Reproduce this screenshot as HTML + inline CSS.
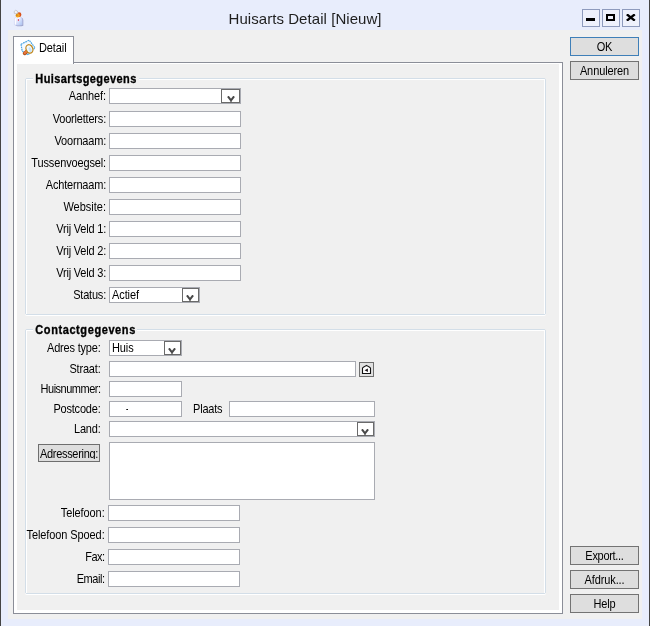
<!DOCTYPE html>
<html><head><meta charset="utf-8"><title>Huisarts Detail [Nieuw]</title>
<style>
*{box-sizing:border-box;margin:0;padding:0}
html,body{width:650px;height:626px;overflow:hidden}
body{will-change:transform;background:#e8edfc;font-family:"Liberation Sans",sans-serif;font-size:11px;color:#000;position:relative}
.abs,.lbl,.inp,.cmb,.btn,.grp,.gt{position:absolute}
#bl{left:0;top:0;width:1px;height:626px;background:#444}
#br{left:649px;top:0;width:1px;height:626px;background:#444}
#title{letter-spacing:.06px;left:228.5px;top:8px;width:152px;height:22px;font-size:15px;line-height:22px;color:#1e1e1e;white-space:nowrap}
#client{left:8px;top:30px;width:634px;height:589px;background:#f0f0f0}
.wb{position:absolute;top:9px;width:18px;height:18px;border:1px solid #8e9bbd;background:#eef1fc}
.page{left:13px;top:62px;width:550px;height:552px;border:1px solid #8b8e98;background:#fff}
.pagein{left:17px;top:64px;width:542px;height:546px;background:#f0f0f0}
.tab{left:13px;top:36px;width:61px;height:28px;border:1px solid #8b8e98;border-bottom:none;background:#fff}
.t{display:inline-block;transform:scaleY(1.12)}
.tabtxt{left:39px;top:42px;line-height:13px;letter-spacing:-0.1px;transform:scaleY(1.12)}
.grp{border:1px solid #d3dee8;border-radius:2px;box-shadow:0 1px 0 #fff}
.grp:after{content:"";position:absolute;left:0;top:0;right:0;bottom:0;border:1px solid #fff;border-bottom:none;border-radius:1px 1px 0 0}
.gt{-webkit-text-stroke:.3px #000;font-weight:bold;line-height:13px;letter-spacing:.42px;padding:0 3px 0 3px;white-space:nowrap;transform:scaleY(1.12)}
.lbl{text-align:right;line-height:13px;white-space:nowrap;letter-spacing:-.2px;transform:scaleY(1.12)}
.inp{background:#fff;border:1px solid #a9abb2;height:16px}
.cmb{background:#fff;border:1px solid #a9abb2;height:16px;line-height:13px;padding-left:2px;padding-top:1px;letter-spacing:-.1px}
.cmb i{position:absolute;right:0;top:0;width:19px;height:14px;border:1px solid #6a6a6a;background:#fff}
.cmb i svg{position:absolute;left:4.6px;top:6px}
.cmb i.n{width:17px}
.cmb i.n svg{left:3.4px}
.btn{background:#dedede;border:1px solid #737373;text-align:center;line-height:19px;height:19px;white-space:nowrap;letter-spacing:-.1px}
</style></head><body>
<div class="abs" id="bl"></div><div class="abs" id="br"></div>
<svg class="abs" style="left:12px;top:8px" width="14" height="19" viewBox="0 0 14 19">
<defs><linearGradient id="coat" x1="0" y1="0" x2="1" y2="1"><stop offset="0" stop-color="#ffffff"/><stop offset=".45" stop-color="#e2e6fc"/><stop offset="1" stop-color="#a6c4f3"/></linearGradient></defs>
<path d="M3.2 17.2 V11.6 Q3.2 9.4 5.2 9 L8.6 9 Q10.6 9.4 10.8 11.6 V17.2 Q7 18.2 3.2 17.2Z" fill="#7a83b5" opacity=".7" transform="translate(.5,.5)"/>
<path d="M2.4 16.8 V11.4 Q2.4 9.2 4.4 8.8 L8 8.8 Q10 9.2 10.2 11.4 V16.8 Q6.3 17.8 2.4 16.8Z" fill="url(#coat)" stroke="#c4caee" stroke-width=".5"/>
<path d="M3.4 10.5 V16.6" stroke="#fff" stroke-width="1"/>
<path d="M4.6 9.4 L6.3 11 L8 9.4Z" fill="#fff"/>
<rect x="5.9" y="11" width=".9" height="2" fill="#e0405a"/>
<circle cx="7" cy="6.7" r="2.4" fill="#d9501a"/>
<circle cx="5.7" cy="7.4" r="2.1" fill="#f5a21d"/>
<circle cx="4.9" cy="6.9" r=".5" fill="#5a4a20"/>
<path d="M2.3 5.4 Q1.6 2.8 3.6 2.3 Q5.8 2.3 6 5.1 Q4 6.1 2.3 5.4Z" fill="#f4f4f4" stroke="#aeaeba" stroke-width=".6"/>
</svg>
<div class="abs" id="title">Huisarts Detail [Nieuw]</div>
<div class="wb" style="left:582px"><div class="abs" style="left:3px;top:8px;width:9px;height:3px;background:#000"></div></div>
<div class="wb" style="left:602px"><div class="abs" style="left:3px;top:4px;width:9px;height:7px;border:2px solid #000"></div></div>
<div class="wb" style="left:622px"><svg class="abs" style="left:3px;top:4px" width="10" height="7" viewBox="0 0 10 7"><path d="M0.8 0.3 L8.8 6.7 M8.8 0.3 L0.8 6.7" stroke="#000" stroke-width="2.3"/></svg></div>
<div class="abs" id="client"></div>

<div class="abs page"></div>
<div class="abs tab"></div>
<div class="abs pagein"></div>
<svg class="abs" style="left:19px;top:38px" width="18" height="19" viewBox="0 0 18 19">
<path d="M2 6.2 L10.2 2.2 L16 9.8 L9 16.8 L3.2 13.2Z" fill="#f6fbff" stroke="#4aa5e2" stroke-width="1.2" stroke-dasharray="1.7 .7"/>
<path d="M8 13.3 L5.6 15.4" stroke="#a84c16" stroke-width="3.6" stroke-linecap="round"/>
<path d="M8 13 L5.6 15" stroke="#e8763a" stroke-width="2.3" stroke-linecap="round"/>
<ellipse cx="10.4" cy="10.9" rx="3.3" ry="4.3" transform="rotate(-24 10.4 10.9)" fill="#f2f9ff" stroke="#c28a22" stroke-width="1.3"/>
<ellipse cx="11.1" cy="11.6" rx="1.3" ry="2.5" transform="rotate(-24 11.1 11.6)" fill="#c4e3fb"/>
</svg>
<div class="abs tabtxt">Detail</div>

<!-- group 1 -->
<div class="grp" style="left:25px;top:78px;width:521px;height:237px"></div>
<div class="abs" style="left:33px;top:77px;width:106px;height:4px;background:#f0f0f0"></div>
<div class="gt" style="left:32.3px;top:73px">Huisartsgegevens</div>
<div class="lbl" style="left:20px;width:86px;top:90px;letter-spacing:-.1px">Aanhef:</div>
<div class="cmb" style="left:109px;top:88px;width:132px"><i><svg width="8" height="7" viewBox="0 0 8 7"><path d="M0.9 0.3 L4 4.3 L7.1 0.3" fill="none" stroke="#484848" stroke-width="2"/><path d="M4 4 V6.6" stroke="#555" stroke-width="1"/></svg></i></div>
<div class="lbl" style="left:20px;width:86px;top:113px">Voorletters:</div>
<div class="inp" style="left:109px;top:111px;width:132px"></div>
<div class="lbl" style="left:20px;width:86px;top:135px">Voornaam:</div>
<div class="inp" style="left:109px;top:133px;width:132px"></div>
<div class="lbl" style="left:20px;width:86px;top:157px;letter-spacing:-.14px">Tussenvoegsel:</div>
<div class="inp" style="left:109px;top:155px;width:132px"></div>
<div class="lbl" style="left:20px;width:86px;top:179px">Achternaam:</div>
<div class="inp" style="left:109px;top:177px;width:132px"></div>
<div class="lbl" style="left:20px;width:86px;top:201px;letter-spacing:0">Website:</div>
<div class="inp" style="left:109px;top:199px;width:132px"></div>
<div class="lbl" style="left:20px;width:86px;top:223px">Vrij Veld 1:</div>
<div class="inp" style="left:109px;top:221px;width:132px"></div>
<div class="lbl" style="left:20px;width:86px;top:245px">Vrij Veld 2:</div>
<div class="inp" style="left:109px;top:243px;width:132px"></div>
<div class="lbl" style="left:20px;width:86px;top:267px">Vrij Veld 3:</div>
<div class="inp" style="left:109px;top:265px;width:132px"></div>
<div class="lbl" style="left:20px;width:86px;top:289px">Status:</div>
<div class="cmb" style="left:109px;top:287px;width:91px"><span class="t">Actief</span><i class="n"><svg width="8" height="7" viewBox="0 0 8 7"><path d="M0.9 0.3 L4 4.3 L7.1 0.3" fill="none" stroke="#484848" stroke-width="2"/><path d="M4 4 V6.6" stroke="#555" stroke-width="1"/></svg></i></div>

<!-- group 2 -->
<div class="grp" style="left:25px;top:329px;width:521px;height:265px"></div>
<div class="abs" style="left:33px;top:328px;width:104px;height:4px;background:#f0f0f0"></div>
<div class="gt" style="left:32.3px;top:324px;letter-spacing:.59px">Contactgegevens</div>
<div class="lbl" style="left:20px;width:80.5px;top:342px">Adres type:</div>
<div class="cmb" style="left:109px;top:340px;width:73px"><span class="t">Huis</span><i class="n"><svg width="8" height="7" viewBox="0 0 8 7"><path d="M0.9 0.3 L4 4.3 L7.1 0.3" fill="none" stroke="#484848" stroke-width="2"/><path d="M4 4 V6.6" stroke="#555" stroke-width="1"/></svg></i></div>
<div class="lbl" style="left:20px;width:80.5px;top:363px">Straat:</div>
<div class="inp" style="left:109px;top:361px;width:247px"></div>
<div class="btn" style="left:359px;top:362px;width:15px;height:15px;border-color:#6f6f6f;background:#e1e1e1"><svg class="abs" style="left:0;top:0" width="13" height="13" viewBox="0 0 13 13"><path d="M2.5 10.5 V5.2 Q2.6 4.2 6.5 2.4 Q10.4 4.2 10.5 5.2 V10.5 Z" fill="#fff" stroke="#111" stroke-width="1.1"/><path d="M7.9 5.5 V8.9 L4.6 7.2 Z" fill="#1a1216"/></svg></div>
<div class="lbl" style="left:20px;width:80.5px;top:383px;letter-spacing:-.5px">Huisnummer:</div>
<div class="inp" style="left:109px;top:381px;width:73px"></div>
<div class="lbl" style="left:20px;width:80.5px;top:403px">Postcode:</div>
<div class="inp" style="left:109px;top:401px;width:73px;line-height:13px;padding-left:15.6px"><span class="t" style="transform:scaleX(.62);transform-origin:0 50%">-</span></div>
<div class="lbl" style="left:193px;top:403px;text-align:left">Plaats</div>
<div class="inp" style="left:229px;top:401px;width:146px"></div>
<div class="lbl" style="left:20px;width:80.5px;top:423px">Land:</div>
<div class="cmb" style="left:109px;top:421px;width:266px"><i class="n"><svg width="8" height="7" viewBox="0 0 8 7"><path d="M0.9 0.3 L4 4.3 L7.1 0.3" fill="none" stroke="#484848" stroke-width="2"/><path d="M4 4 V6.6" stroke="#555" stroke-width="1"/></svg></i></div>
<div class="btn" style="left:38px;top:444px;width:62px;height:18px;border-color:#6e6e6e;letter-spacing:-.3px"><div style="height:14px;overflow:hidden;line-height:19px"><span class="t">Adressering:</span></div></div>
<div class="inp" style="left:109px;top:442px;width:266px;height:58px"></div>
<div class="lbl" style="left:20px;width:84.6px;top:507px;letter-spacing:-.1px">Telefoon:</div>
<div class="inp" style="left:108px;top:505px;width:132px"></div>
<div class="lbl" style="left:20px;width:84.6px;top:529px;letter-spacing:-.1px">Telefoon Spoed:</div>
<div class="inp" style="left:108px;top:527px;width:132px"></div>
<div class="lbl" style="left:20px;width:84.6px;top:551px;letter-spacing:-.5px">Fax:</div>
<div class="inp" style="left:108px;top:549px;width:132px"></div>
<div class="lbl" style="left:20px;width:84.6px;top:573px;letter-spacing:-.45px">Email:</div>
<div class="inp" style="left:108px;top:571px;width:132px"></div>

<!-- buttons -->
<div class="btn" style="left:570px;top:37px;width:69px;border-color:#3f7fb8"><span class="t">OK</span></div>
<div class="btn" style="left:570px;top:61px;width:69px"><span class="t">Annuleren</span></div>
<div class="btn" style="left:570px;top:546px;width:69px;letter-spacing:-.3px"><span class="t">Export...</span></div>
<div class="btn" style="left:570px;top:570px;width:69px"><span class="t">Afdruk...</span></div>
<div class="btn" style="left:570px;top:594px;width:69px"><span class="t">Help</span></div>
</body></html>
